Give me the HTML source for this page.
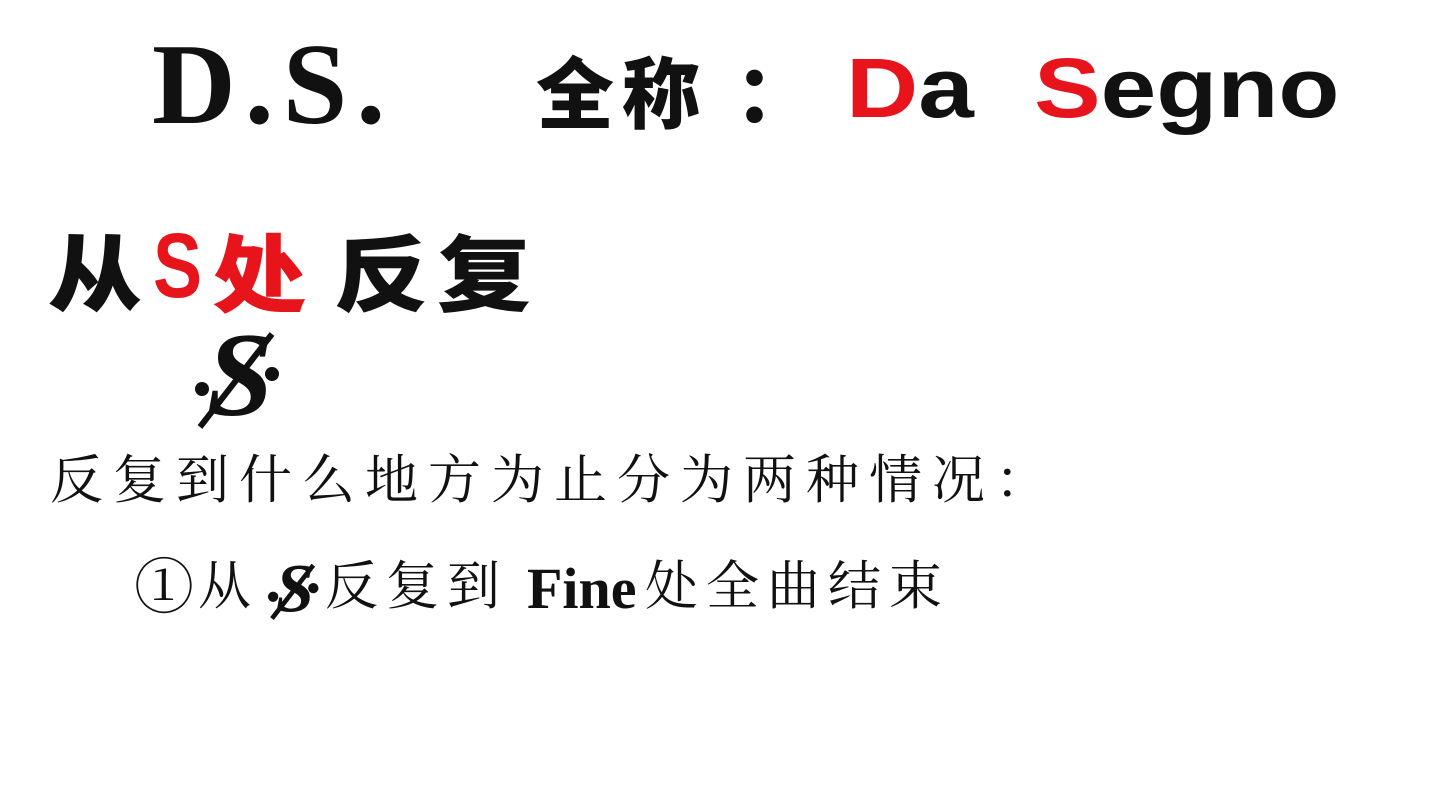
<!DOCTYPE html>
<html><head><meta charset="utf-8"><style>
html,body{margin:0;padding:0;background:#fff;width:1448px;height:789px;overflow:hidden;position:relative}
.a{position:absolute;white-space:nowrap;line-height:1}
.ds{left:152px;top:27px;font-family:"Liberation Serif",serif;font-weight:bold;font-size:116px;color:#111;letter-spacing:9px}
.qc{top:50px;font-family:"Noto Sans CJK SC",sans-serif;font-weight:900;font-size:78px;color:#111}
.en{top:46px;font-family:"Liberation Sans",sans-serif;font-weight:bold;font-size:84px;color:#111;transform:scaleX(1.19);transform-origin:0 0}
.h{top:228px;font-family:"Noto Sans CJK SC",sans-serif;font-weight:900;font-size:84px;color:#111;transform:scaleX(1.12);transform-origin:0 0}
.r,.h.r{color:#e8141b}
.l1{left:50px;top:450px;font-family:"Noto Serif CJK SC",serif;font-size:53px;color:#111;letter-spacing:10px}
.l2{top:556px;font-family:"Noto Serif CJK SC",serif;font-size:53px;color:#111;letter-spacing:8px}
.fine{top:560px;left:527px;font-family:"Liberation Serif",serif;font-weight:bold;font-size:58px;color:#111}
</style></head><body>
<div class="a ds">D.S.</div>
<div class="a qc" style="left:536px">全</div>
<div class="a qc" style="left:622px">称</div>
<div class="a qc" style="left:735px">：</div>
<div class="a en" style="left:846px"><span class="r">D</span>a</div>
<div class="a en" style="left:1034px"><span class="r">S</span>egno</div>
<div class="a h" style="left:48px">从</div>
<div class="a h r" style="left:153px;font-family:'Liberation Sans',sans-serif;font-weight:bold;top:220px;font-size:92px;transform:scaleX(0.8)">S</div>
<div class="a h r" style="left:212px">处</div>
<div class="a h" style="left:334px">反</div>
<div class="a h" style="left:437px">复</div>
<svg class="a" style="left:190px;top:325px" width="95" height="108" viewBox="0 0 95 108">
<text x="50" y="90" text-anchor="middle" font-family="Liberation Serif" font-style="italic" font-weight="bold" font-size="120" fill="#111">S</text>
<line x1="10" y1="102" x2="82" y2="9" stroke="#111" stroke-width="6"/>
<circle cx="12" cy="64" r="7" fill="#111"/><circle cx="82" cy="49" r="7" fill="#111"/>
</svg>
<div class="a l1">反复到什么地方为止分为两种情况：</div>
<div class="a l2" style="left:134px;font-size:60px;top:553px">①</div>
<div class="a l2" style="left:198px">从</div>
<svg class="a" style="left:266px;top:560px" width="55" height="62" viewBox="0 0 95 108">
<text x="50" y="90" text-anchor="middle" font-family="Liberation Serif" font-style="italic" font-weight="bold" font-size="120" fill="#111">S</text>
<line x1="10" y1="102" x2="82" y2="9" stroke="#111" stroke-width="8"/>
<circle cx="12" cy="64" r="9" fill="#111"/><circle cx="82" cy="49" r="9" fill="#111"/>
</svg>
<div class="a l2" style="left:325px">反复到</div>
<div class="a fine">Fine</div>
<div class="a l2" style="left:645px">处全曲结束</div>
</body></html>
